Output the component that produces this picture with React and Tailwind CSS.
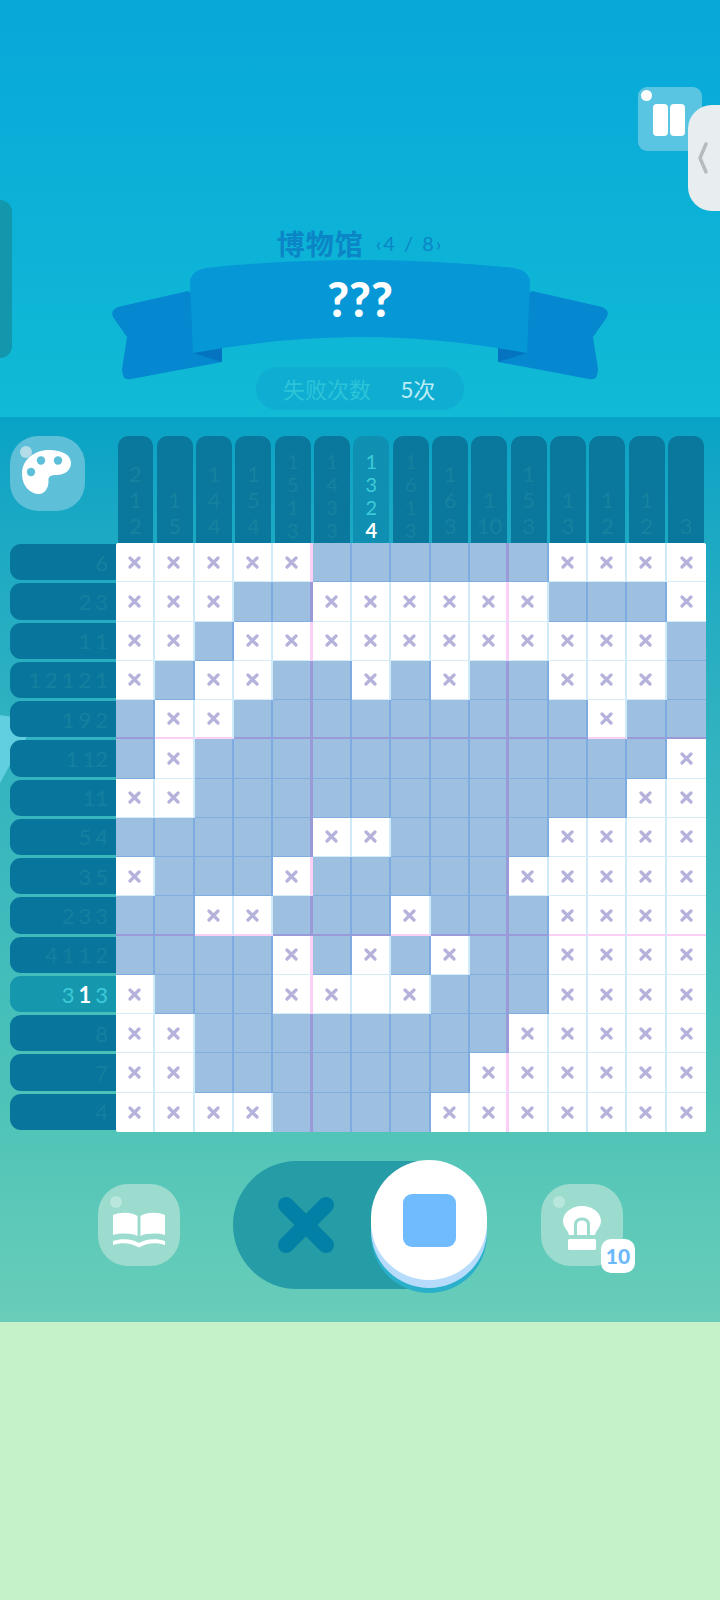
const FILLED = "#";
const CROSS = "x";

// 15x15 board, one string per row
const board = [
  "xxxxx######xxxx",
  "xxx##xxxxxx###x",
  "xx#xxxxxxxxxxx#",
  "x#xx##x#x##xxx#",
  "#xx#########x##",
  "#x############x",
  "xx###########xx",
  "#####xx####xxxx",
  "x###x#####xxxxx",
  "##xx###x###xxxx",
  "####x#x#x##xxxx",
  "x###xx.x###xxxx",
  "xx########xxxxx",
  "xx#######xxxxxx",
  "xxxx####xxxxxxx",
];

const columnClues = [
  [2, 1, 2],
  [1, 5],
  [1, 4, 4],
  [1, 5, 4],
  [1, 5, 1, 3],
  [1, 4, 3, 3],
  [1, 3, 2, 4],
  [1, 6, 1, 3],
  [1, 6, 3],
  [1, 10],
  [1, 5, 3],
  [1, 3],
  [1, 2],
  [1, 2],
  [3],
];

const rowClues = [
  [6],
  [2, 3],
  [1, 1],
  [1, 2, 1, 2, 1],
  [1, 9, 2],
  [1, 12],
  [11],
  [5, 4],
  [3, 5],
  [2, 3, 3],
  [4, 1, 1, 2],
  [3, 1, 3],
  [8],
  [7],
  [4],
];

const ACTIVE_COL = 6;
const ACTIVE_ROW = 11;

function cellClass(value, row, col) {
  const filled = value === FILLED;
  const thickCol = col === 4 || col === 9;
  const thickRow = row === 4 || row === 9;
  const lastCol = col === 14;
  const lastRow = row === 14;

  let cls = "flex items-center justify-center ";
  cls += filled ? "bg-[#9dbfe0] " : "bg-white ";

  if (lastCol) cls += "";
  else if (thickCol) cls += filled ? "border-r-[3px] border-r-[#9a9ad8] " : "border-r-[3px] border-r-[#fbd0f6] ";
  else cls += filled ? "border-r-[2px] border-r-[#7dabe2] " : "border-r-[2px] border-r-[#cfeaf9] ";

  if (lastRow) cls += "";
  else if (thickRow) cls += filled ? "border-b-[2px] border-b-[#9a9ad8] " : "border-b-[2px] border-b-[#fbd0f6] ";
  else cls += filled ? "border-b border-b-[#82aedf] " : "border-b border-b-[#d3ecf8] ";

  return cls;
}

function CrossMark() {
  return (
    <svg width="13" height="13" viewBox="0 0 13 13">
      <path d="M2 2 11 11M11 2 2 11" stroke="#b5b3dc" strokeWidth="3.200" strokeLinecap="round" />
    </svg>
  );
}

function GlossDot({ className }) {
  return <span className={`absolute rounded-full ${className}`} />;
}

function Ribbon() {
  return (
    <svg className="absolute inset-0" width="500" height="125" viewBox="0 0 500 125">
      <path d="M78 32 8 48Q0 51 3 58L17 78 12 110Q12 122 21 120L112 103V58Z" fill="#0588cf" />
      <path d="M422 32 492 48Q500 51 497 58L483 78 488 110Q488 122 479 120L388 103V58Z" fill="#0588cf" />
      <path d="M83 94 112 89V103Z" fill="#0474c0" />
      <path d="M417 94 388 89V103Z" fill="#0474c0" />
      <path d="M80 24Q80 12 96 9 170 1 250 1T404 9Q420 12 420 24L417 94Q330 78 250 78T83 94Z" fill="#0697d6" />
    </svg>
  );
}

function PaletteIcon() {
  return (
    <svg width="50" height="45" viewBox="0 0 50 45">
      <path
        d="M27 0C40 0 49 5 49 13 49 20 43 25 35 25 29 25 26 26 26.500 31 27 37 23 44 17 44 8 44 0 36 0 24 0 10 12 0 27 0Z"
        fill="#fff"
      />
      <circle cx="19" cy="10.500" r="4.200" fill="#5dbfd8" />
      <circle cx="36" cy="10.500" r="4.200" fill="#5dbfd8" />
      <circle cx="9" cy="22" r="4.200" fill="#5dbfd8" />
    </svg>
  );
}

function BookIcon() {
  return (
    <svg width="54" height="36" viewBox="0 0 54 36" fill="#fff">
      <path d="M1 3C9 0 19 0 25.500 4V24C19 21 9 21 1 23Z" />
      <path d="M53 3C45 0 35 0 28.500 4V24C35 21 45 21 53 23Z" />
      <path d="M1 29C10 26 21 27 27 31 33 27 44 26 53 29V33C44 30 35 31 27 35.500 19 31 10 30 1 33Z" />
    </svg>
  );
}

function BulbIcon() {
  return (
    <svg width="40" height="46" viewBox="0 0 40 46">
      <path d="M20 1C31 1 39 8 39 16 39 22 34 25 33 30H7C6 25 1 22 1 16 1 8 9 1 20 1Z" fill="#fff" />
      <path d="M13.500 30V20C13.500 16 16 14 20 14S26.500 16 26.500 20V30" fill="none" stroke="#9ddccf" strokeWidth="3" />
      <rect x="6" y="34" width="28" height="11" rx="1.500" fill="#fff" />
    </svg>
  );
}

function ColumnClue({ clue, active }) {
  const small = clue.length > 3;
  return (
    <div
      className={`ml-[1.500px] mr-[2px] flex flex-col items-center justify-end rounded-t-[10px] font-['Lato',sans-serif] ${
        active ? "bg-[#0f8fb2] text-[#3ccbd8]" : "bg-[#0a789d] text-[#15829f]"
      } ${small ? "pb-[1px] text-[20px] leading-[23px]" : "pb-[4px] text-[22px] leading-[26px]"}`}
    >
      {clue.map((n, i) => (
        <span key={i} className={active && i === clue.length - 1 ? "font-bold text-white" : ""}>
          {n}
        </span>
      ))}
    </div>
  );
}

function RowClue({ clue, active }) {
  return (
    <div
      className={`mt-[1px] mb-[2px] flex items-center justify-end gap-[4px] rounded-l-[11px] pr-[8px] font-['Lato',sans-serif] text-[22px] ${
        active ? "bg-[#1597ae] text-[#3ccbd8]" : "bg-[#08769c] text-[#14809f]"
      }`}
    >
      {clue.map((n, i) => (
        <span key={i} className={active && i === 1 ? "font-bold text-white" : ""}>
          {n}
        </span>
      ))}
    </div>
  );
}

function Header() {
  return (
    <header className="flex h-[417px] flex-col items-center bg-gradient-to-b from-[#08a8d9] to-[#11bad5] pt-[87px]">
      <button className="relative mr-[18px] size-[64px] self-end rounded-[9px] bg-[#5ac5e3]">
        <GlossDot className="top-[3px] left-[3px] size-[11px] bg-white" />
        <span className="absolute top-[17px] left-[15px] h-[32px] w-[15px] rounded-[4px] bg-white" />
        <span className="absolute top-[17px] left-[32px] h-[32px] w-[15px] rounded-[4px] bg-white" />
      </button>

      <div className="mt-[76px] flex h-[32px] items-center gap-[12px] text-[#0b85c6]">
        <span className="font-['Noto_Sans_CJK_SC',sans-serif] text-[28px] font-bold tracking-[1px]">博物馆</span>
        <span className="font-['Lato',sans-serif] text-[20px] tracking-[2px]">‹4 / 8›</span>
      </div>

      <div className="relative flex h-[125px] w-[500px] justify-center">
        <Ribbon />
        <span className="relative mt-[10px] font-['Lato',sans-serif] text-[47px] leading-[60px] font-black text-white">
          ???
        </span>
      </div>

      <div className="mt-[-17px] flex h-[43px] w-[208px] items-center gap-[30px] rounded-full bg-[#0fadd2] pl-[27px] font-['Noto_Sans_CJK_SC',sans-serif] text-[22px]">
        <span className="relative text-[#2cc4d8]">失败次数</span>
        <span className="relative text-[#bcecf6]">5次</span>
      </div>
    </header>
  );
}

function Board() {
  return (
    <div className="grid h-[589px] w-[590px] grid-cols-[repeat(15,1fr)] grid-rows-[repeat(15,1fr)] overflow-hidden rounded-[2px]">
      {board.map((line, r) =>
        line.split("").map((value, c) => (
          <div key={`${r}-${c}`} className={cellClass(value, r, c)}>
            {value === CROSS ? <CrossMark /> : null}
          </div>
        )),
      )}
    </div>
  );
}

function Controls() {
  return (
    <div className="mt-[29px] flex items-center pl-[98px]">
      <button className="relative flex size-[82px] items-center justify-center rounded-[30px] bg-[#9cdccf]">
        <GlossDot className="top-[12px] left-[12px] size-[12px] bg-[#b9e6dd]" />
        <span className="mt-[9px] flex">
          <BookIcon />
        </span>
      </button>

      <div className="relative mr-[54px] ml-[53px] h-[128px] w-[254px] rounded-full bg-[#259ca6]">
        <svg className="absolute top-[35px] left-[44px]" width="58" height="58" viewBox="0 0 58 58">
          <path d="M9 9 49 49M49 9 9 49" stroke="#0280a6" strokeWidth="16" strokeLinecap="round" />
        </svg>
        <div className="absolute top-[-1px] right-0 flex h-[120px] w-[116px] items-center justify-center rounded-full bg-white shadow-[0_8px_0_#b7dcfb,0_13px_0_#2bb0cc]">
          <span className="size-[53px] rounded-[9px] bg-[#6fbbfd]" />
        </div>
      </div>

      <button className="relative flex size-[82px] items-center justify-center rounded-[30px] bg-[#9cdccf]">
        <GlossDot className="top-[12px] left-[12px] size-[12px] bg-[#b9e6dd]" />
        <span className="mt-[6px] flex">
          <BulbIcon />
        </span>
        <span className="absolute top-[55px] left-[60px] flex size-[34px] items-center justify-center rounded-[10px] bg-white font-['Lato',sans-serif] text-[21px] font-black text-[#6cb8fb]">
          10
        </span>
      </button>
    </div>
  );
}

export default function App() {
  return (
    <div className="relative h-[1600px] w-[720px] overflow-hidden bg-[#c5f2c8]">
      <Header />

      <main className="relative h-[905px] bg-gradient-to-b from-[#07a3c6] via-[#4cc3b8] via-75% to-[#69cdb9]">
        {/* pale wave behind the row clues */}
        <svg className="absolute top-[290px] left-0" width="40" height="90" viewBox="0 0 40 90">
          <path d="M0 8C12 10 26 12 40 14 30 22 14 50 0 76Z" fill="#62cfe0" />
        </svg>

        <div className="relative flex pt-[19px]">
          <div className="w-[116px] pl-[10px]">
            <button className="relative flex size-[75px] items-center justify-center rounded-[28px] bg-[#5dbfd8]">
              <GlossDot className="top-[10px] left-[10px] size-[12px] bg-[#b4dde8]" />
              <span className="ml-[-2px] mt-[-2px] flex">
                <PaletteIcon />
              </span>
            </button>
          </div>
          <div className="grid h-[107px] w-[590px] grid-cols-[repeat(15,1fr)]">
            {columnClues.map((clue, i) => (
              <ColumnClue key={i} clue={clue} active={i === ACTIVE_COL} />
            ))}
          </div>
        </div>

        <div className="relative flex">
          <div className="grid h-[589px] w-[116px] grid-rows-[repeat(15,1fr)] pl-[9.500px]">
            {rowClues.map((clue, i) => (
              <RowClue key={i} clue={clue} active={i === ACTIVE_ROW} />
            ))}
          </div>
          <Board />
        </div>

        <Controls />
      </main>

      {/* floating side tabs sit over the page */}
      <div className="absolute top-[200px] left-0 h-[158px] w-[12px] rounded-r-[12px] bg-[#1297ac]" />
      <div className="absolute top-[105px] right-0 flex h-[106px] w-[32px] items-center rounded-l-[24px] bg-[#e8eef0] pl-[10px]">
        <svg width="10" height="32" viewBox="0 0 10 32">
          <path d="M8 2 2 16 8 30" fill="none" stroke="#b5bcbf" strokeWidth="3.500" strokeLinecap="round" strokeLinejoin="round" />
        </svg>
      </div>
    </div>
  );
}
